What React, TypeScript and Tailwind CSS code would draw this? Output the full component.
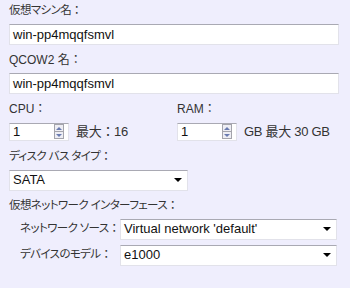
import type { ReactNode } from 'react';

const font = "font-['Liberation_Sans','Noto_Sans_CJK_JP',sans-serif] [font-feature-settings:'palt']";

// colon keeps its full width, kana get proportional spacing
function J({ text }: { text: string }) {
  const parts = text.split('：');
  return (
    <>
      {parts.map((p, i) => (
        <span key={i}>
          {p}
          {i < parts.length - 1 && <span className="[font-feature-settings:normal]">：</span>}
        </span>
      ))}
    </>
  );
}

function Label({ children, latin = false }: { children: ReactNode; latin?: boolean }) {
  return (
    <div
      className={`h-[22px] flex items-center text-[#333] whitespace-nowrap ${
        latin ? 'text-[12px]' : 'text-[11.5px] tracking-[-0.6px]'
      }`}
    >
      {children}
    </div>
  );
}

function TextBox({ value, className = '' }: { value: string; className?: string }) {
  return (
    <div
      className={`h-[21px] bg-white border border-[#e2e2ea] border-t-[#a9a9b3] flex items-center pl-[3px] text-[13px] text-[#111] ${className}`}
    >
      {value}
    </div>
  );
}

function Select({ value, className = '' }: { value: string; className?: string }) {
  return (
    <div
      className={`h-[21px] bg-white border border-[#e2e2ea] border-t-[#a9a9b3] flex items-center justify-between pl-[3px] pr-[5px] text-[13px] text-[#111] ${className}`}
    >
      <span>{value}</span>
      <span className="w-0 h-0 border-l-[4px] border-r-[4px] border-t-[4px] border-l-transparent border-r-transparent border-t-black" />
    </div>
  );
}

function SpinBox({ value }: { value: string }) {
  return (
    <div className="h-[18px] w-[60px] bg-white border border-[#e2e2ea] border-t-[#a9a9b3] flex items-center justify-between pl-[3px] pr-[4px] text-[13px] text-[#111]">
      <span>{value}</span>
      <div className="flex flex-col w-[10px] h-[15px] border border-[#a4a4ac] bg-[#eeeef4]">
        <div className="flex-1 flex items-center justify-center border-b border-[#a4a4ac]">
          <span className="w-0 h-0 border-l-[3px] border-r-[3px] border-b-[3px] border-l-transparent border-r-transparent border-b-[#6a7bb0]" />
        </div>
        <div className="flex-1 flex items-center justify-center">
          <span className="w-0 h-0 border-l-[3px] border-r-[3px] border-t-[3px] border-l-transparent border-r-transparent border-t-[#6a7bb0]" />
        </div>
      </div>
    </div>
  );
}

export default function App() {
  return (
    <div className={`w-[350px] h-[288px] bg-[#efeefd] pl-[9px] ${font}`}>
      <Label><J text="仮想マシン名：" /></Label>
      <TextBox value="win-pp4mqqfsmvl" className="mt-[2px] w-[330px]" />

      <div className="mt-[4px]">
        <Label latin><J text="QCOW2 名：" /></Label>
        <TextBox value="win-pp4mqqfsmvl" className="mt-[2px] w-[330px]" />
      </div>

      <div className="mt-[4px] flex">
        <div className="w-[168px]">
          <Label latin><J text="CPU：" /></Label>
          <div className="mt-[2px] flex items-center gap-[7px]">
            <SpinBox value="1" />
            <span className="text-[13px] tracking-[-0.3px] text-[#333] whitespace-nowrap"><J text="最大：16" /></span>
          </div>
        </div>
        <div>
          <Label latin><J text="RAM：" /></Label>
          <div className="mt-[2px] flex items-center gap-[7px]">
            <SpinBox value="1" />
            <span className="text-[13px] tracking-[-0.3px] text-[#333] whitespace-nowrap">GB 最大 30 GB</span>
          </div>
        </div>
      </div>

      <div className="mt-[4px]">
        <Label><J text="ディスク バス タイプ：" /></Label>
        <Select value="SATA" className="mt-[2px] w-[179px]" />
      </div>

      <div className="mt-[4px]">
        <Label><J text="仮想ネットワーク インターフェース：" /></Label>
        <div className="mt-[2px] pl-[11px] flex flex-col gap-[5px]">
          <div className="flex items-center">
            <span className="w-[100px] text-[11.5px] tracking-[-0.6px] text-[#333] whitespace-nowrap"><J text="ネットワーク ソース：" /></span>
            <Select value="Virtual network 'default'" className="w-[217px]" />
          </div>
          <div className="flex items-center">
            <span className="w-[100px] text-[11.5px] tracking-[-0.6px] text-[#333] whitespace-nowrap"><J text="デバイスのモデル：" /></span>
            <Select value="e1000" className="w-[217px]" />
          </div>
        </div>
      </div>
    </div>
  );
}
